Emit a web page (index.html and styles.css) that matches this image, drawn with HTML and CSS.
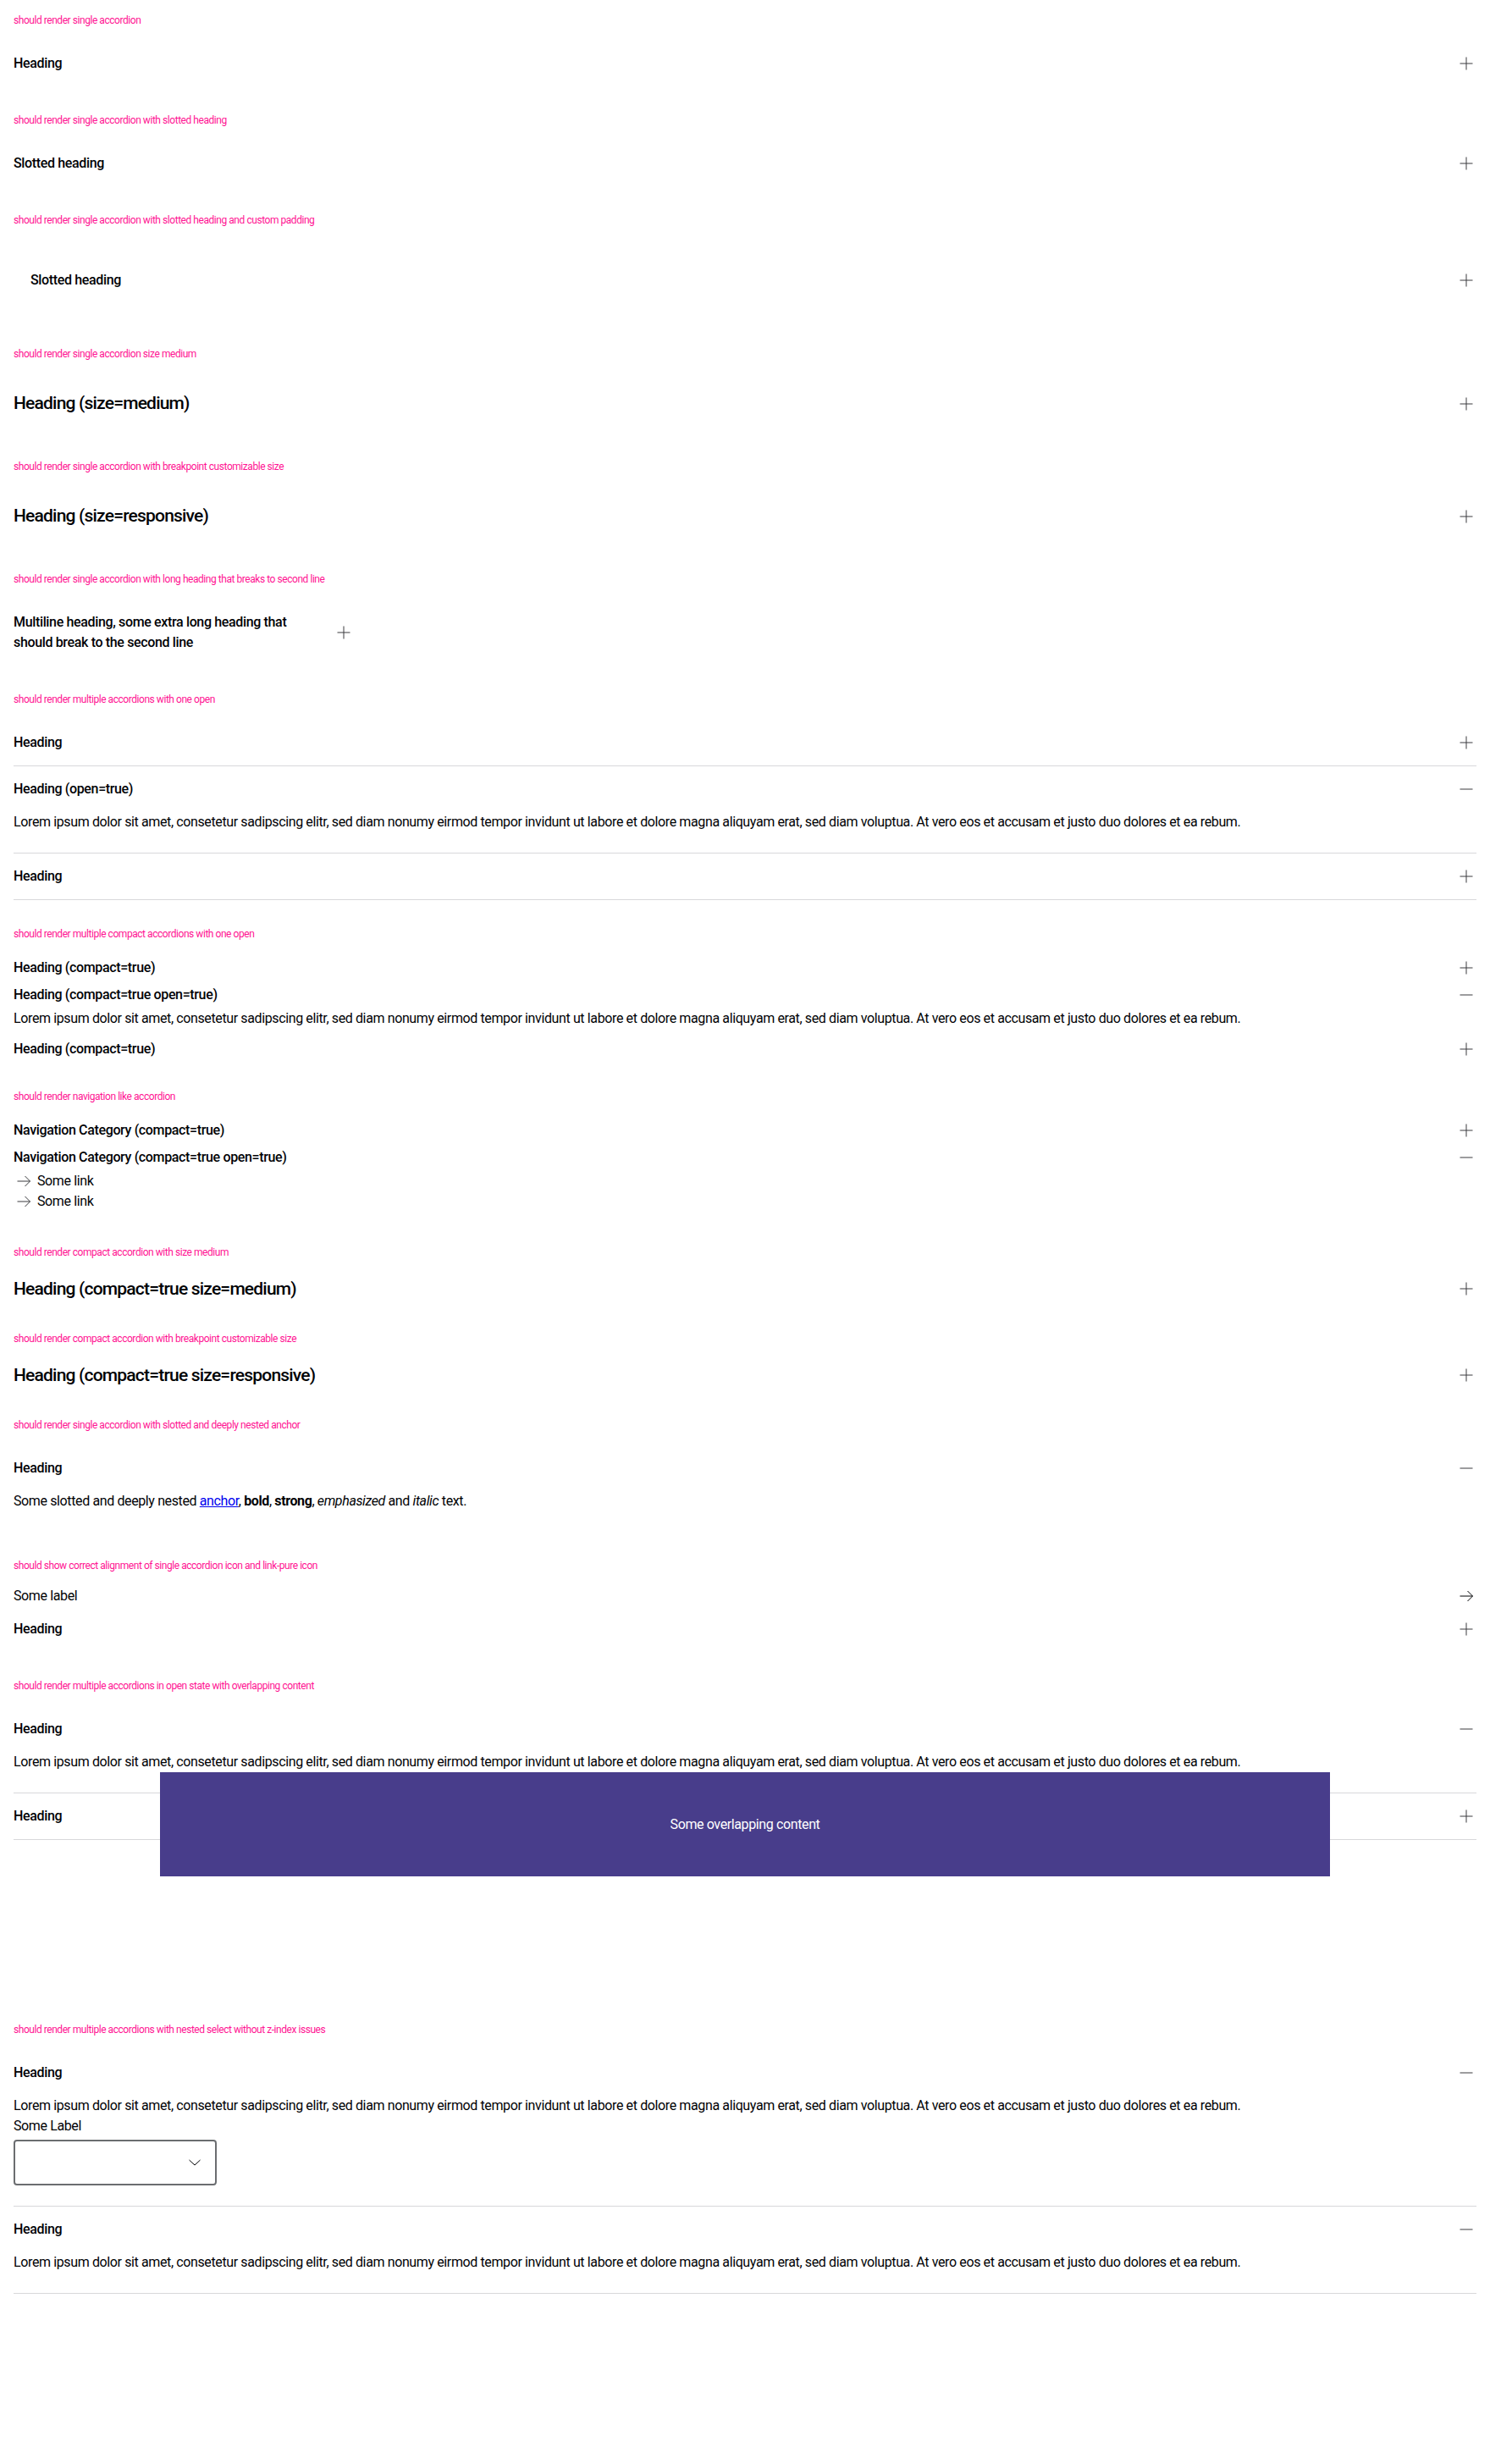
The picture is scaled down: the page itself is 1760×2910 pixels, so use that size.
FILE: index.html
```html
<!DOCTYPE html>
<html lang="en">
<head>
<meta charset="utf-8">
<title>Accordion</title>
<link rel="stylesheet" href="styles.css">
</head>
<body>
<svg width="0" height="0" class="defs" aria-hidden="true">
  <defs>
    <symbol id="i-plus" viewBox="0 0 24 24"><path d="M4.5 12h15M12 4.5v15" fill="none" stroke="currentColor" stroke-width="1"/></symbol>
    <symbol id="i-minus" viewBox="0 0 24 24"><path d="M4.5 12h15" fill="none" stroke="currentColor" stroke-width="1"/></symbol>
    <symbol id="i-arrow" viewBox="0 0 24 24"><path d="M4.5 12h15M13.5 6l6 6-6 6" fill="none" stroke="currentColor" stroke-width="1"/></symbol>
    <symbol id="i-down" viewBox="0 0 24 24"><path d="M5.5 9l6.5 6 6.5-6" fill="none" stroke="currentColor" stroke-width="1"/></symbol>
  </defs>
</svg>
<main class="page">

  <section class="pg">
    <p class="title">should render single accordion</p>
    <div class="acc">
      <div class="head"><span class="h">Heading</span><svg class="ic"><use href="#i-plus"/></svg></div>
    </div>
  </section>

  <section class="pg">
    <p class="title">should render single accordion with slotted heading</p>
    <div class="acc">
      <div class="head"><span class="h">Slotted heading</span><svg class="ic"><use href="#i-plus"/></svg></div>
    </div>
  </section>

  <section class="pg">
    <p class="title">should render single accordion with slotted heading and custom padding</p>
    <div class="acc">
      <div class="head"><span class="h padded">Slotted heading</span><svg class="ic"><use href="#i-plus"/></svg></div>
    </div>
  </section>

  <section class="pg">
    <p class="title">should render single accordion size medium</p>
    <div class="acc medium">
      <div class="head"><span class="h">Heading (size=medium)</span><svg class="ic"><use href="#i-plus"/></svg></div>
    </div>
  </section>

  <section class="pg">
    <p class="title">should render single accordion with breakpoint customizable size</p>
    <div class="acc medium">
      <div class="head"><span class="h">Heading (size=responsive)</span><svg class="ic"><use href="#i-plus"/></svg></div>
    </div>
  </section>

  <section class="pg">
    <p class="title">should render single accordion with long heading that breaks to second line</p>
    <div class="acc narrow">
      <div class="head"><span class="h">Multiline heading, some extra long heading that<br>should break to the second line</span><svg class="ic"><use href="#i-plus"/></svg></div>
    </div>
  </section>

  <section class="pg">
    <p class="title">should render multiple accordions with one open</p>
    <div class="acc lined">
      <div class="head"><span class="h">Heading</span><svg class="ic"><use href="#i-plus"/></svg></div>
    </div>
    <div class="acc lined">
      <div class="head"><span class="h">Heading (open=true)</span><svg class="ic"><use href="#i-minus"/></svg></div>
      <div class="body">Lorem ipsum dolor sit amet, consetetur sadipscing elitr, sed diam nonumy eirmod tempor invidunt ut labore et dolore magna aliquyam erat, sed diam voluptua. At vero eos et accusam et justo duo dolores et ea rebum.</div>
    </div>
    <div class="acc lined">
      <div class="head"><span class="h">Heading</span><svg class="ic"><use href="#i-plus"/></svg></div>
    </div>
  </section>

  <section class="pg">
    <p class="title">should render multiple compact accordions with one open</p>
    <div class="acc compact">
      <div class="head"><span class="h">Heading (compact=true)</span><svg class="ic"><use href="#i-plus"/></svg></div>
    </div>
    <div class="acc compact">
      <div class="head"><span class="h">Heading (compact=true open=true)</span><svg class="ic"><use href="#i-minus"/></svg></div>
      <div class="body">Lorem ipsum dolor sit amet, consetetur sadipscing elitr, sed diam nonumy eirmod tempor invidunt ut labore et dolore magna aliquyam erat, sed diam voluptua. At vero eos et accusam et justo duo dolores et ea rebum.</div>
    </div>
    <div class="acc compact">
      <div class="head"><span class="h">Heading (compact=true)</span><svg class="ic"><use href="#i-plus"/></svg></div>
    </div>
  </section>

  <section class="pg">
    <p class="title">should render navigation like accordion</p>
    <div class="acc compact">
      <div class="head"><span class="h">Navigation Category (compact=true)</span><svg class="ic"><use href="#i-plus"/></svg></div>
    </div>
    <div class="acc compact">
      <div class="head"><span class="h">Navigation Category (compact=true open=true)</span><svg class="ic"><use href="#i-minus"/></svg></div>
      <div class="body">
        <a class="nav-link"><svg class="ic"><use href="#i-arrow"/></svg><span>Some link</span></a>
        <a class="nav-link"><svg class="ic"><use href="#i-arrow"/></svg><span>Some link</span></a>
      </div>
    </div>
  </section>

  <section class="pg">
    <p class="title">should render compact accordion with size medium</p>
    <div class="acc compact medium">
      <div class="head"><span class="h">Heading (compact=true size=medium)</span><svg class="ic"><use href="#i-plus"/></svg></div>
    </div>
  </section>

  <section class="pg">
    <p class="title">should render compact accordion with breakpoint customizable size</p>
    <div class="acc compact medium">
      <div class="head"><span class="h">Heading (compact=true size=responsive)</span><svg class="ic"><use href="#i-plus"/></svg></div>
    </div>
  </section>

  <section class="pg">
    <p class="title">should render single accordion with slotted and deeply nested anchor</p>
    <div class="acc">
      <div class="head"><span class="h">Heading</span><svg class="ic"><use href="#i-minus"/></svg></div>
      <div class="body">Some slotted and deeply nested <a href="#" class="anchor">anchor</a>, <b>bold</b>, <strong>strong</strong>, <em>emphasized</em> and <i>italic</i> text.</div>
    </div>
  </section>

  <section class="pg">
    <p class="title">should show correct alignment of single accordion icon and link-pure icon</p>
    <a class="link-pure"><span>Some label</span><svg class="ic dark"><use href="#i-arrow"/></svg></a>
    <div class="acc">
      <div class="head"><span class="h">Heading</span><svg class="ic"><use href="#i-plus"/></svg></div>
    </div>
  </section>

  <section class="pg">
    <p class="title">should render multiple accordions in open state with overlapping content</p>
    <div class="overlap-wrap">
      <div class="acc lined">
        <div class="head"><span class="h">Heading</span><svg class="ic"><use href="#i-minus"/></svg></div>
        <div class="body">Lorem ipsum dolor sit amet, consetetur sadipscing elitr, sed diam nonumy eirmod tempor invidunt ut labore et dolore magna aliquyam erat, sed diam voluptua. At vero eos et accusam et justo duo dolores et ea rebum.</div>
      </div>
      <div class="acc lined">
        <div class="head"><span class="h">Heading</span><svg class="ic"><use href="#i-plus"/></svg></div>
      </div>
      <div class="overlay">Some overlapping content</div>
    </div>
  </section>

  <section class="pg">
    <p class="title">should render multiple accordions with nested select without z-index issues</p>
    <div class="acc lined">
      <div class="head"><span class="h">Heading</span><svg class="ic"><use href="#i-minus"/></svg></div>
      <div class="body">
        <div>Lorem ipsum dolor sit amet, consetetur sadipscing elitr, sed diam nonumy eirmod tempor invidunt ut labore et dolore magna aliquyam erat, sed diam voluptua. At vero eos et accusam et justo duo dolores et ea rebum.</div>
        <div class="field">
          <span class="field-label">Some Label</span>
          <div class="select"><svg class="chev"><use href="#i-down"/></svg></div>
        </div>
      </div>
    </div>
    <div class="acc lined">
      <div class="head"><span class="h">Heading</span><svg class="ic"><use href="#i-minus"/></svg></div>
      <div class="body">Lorem ipsum dolor sit amet, consetetur sadipscing elitr, sed diam nonumy eirmod tempor invidunt ut labore et dolore magna aliquyam erat, sed diam voluptua. At vero eos et accusam et justo duo dolores et ea rebum.</div>
    </div>
  </section>

</main>
</body>
</html>
```

FILE: styles.css
```css
* { box-sizing: border-box; }

html, body {
  margin: 0;
  background: #ffffff;
}

body {
  color: #010205;
  font-family: Roboto, "Liberation Sans", Arial, sans-serif;
  font-size: 16px;
  line-height: 24px;
  letter-spacing: -0.38px;
}

.defs { position: absolute; width: 0; height: 0; overflow: hidden; }

.page {
  padding: 0 16px;
  min-height: 2910px;
}

.pg {
  padding: 16px 0;
}

.title {
  margin: 0 0 16px;
  font-size: 12px;
  line-height: 16px;
  color: #ff1493;
  letter-spacing: -0.45px;
}

.acc.lined {
  border-bottom: 1px solid #d8d8db;
}

.head {
  display: flex;
  align-items: center;
  justify-content: space-between;
  gap: 24px;
  padding: 15px 0;
}

.h {
  font-size: 16px;
  line-height: 24px;
  font-weight: 500;
  letter-spacing: -0.35px;
}

.h.padded {
  padding: 20px;
}

.ic {
  width: 24px;
  height: 24px;
  flex: none;
  color: #3a3b3e;
}

.ic.dark { color: #010205; }

.body {
  padding-bottom: 24px;
}

.medium .head {
  padding: 20px 0;
}

.medium .h {
  font-size: 21px;
  line-height: 29px;
  letter-spacing: -0.8px;
}

.compact .head {
  padding: 4px 0;
}

.compact .body {
  padding-bottom: 8px;
}

.compact.medium .head {
  padding: 4px 0;
}

.compact.medium .h {
  line-height: 30px;
}

.narrow {
  width: 402px;
}

.nav-link {
  display: flex;
  align-items: center;
  gap: 4px;
  height: 24px;
  color: #010205;
}

.anchor {
  color: #0000ee;
  text-decoration: underline;
}

.link-pure {
  display: flex;
  align-items: center;
  justify-content: space-between;
  height: 24px;
  color: #010205;
}

.overlap-wrap {
  position: relative;
  padding-bottom: 184px;
}

.overlay {
  position: absolute;
  top: 78px;
  left: 10%;
  width: 80%;
  height: 123px;
  background: #483d8b;
  color: #ffffff;
  display: flex;
  align-items: center;
  justify-content: center;
}

.field {
  display: flex;
  flex-direction: column;
}

.field-label {
  line-height: 24px;
}

.select {
  margin-top: 4px;
  width: 240px;
  height: 54px;
  border: 2px solid #6b6d70;
  border-radius: 4px;
  display: flex;
  align-items: center;
  justify-content: flex-end;
  padding-right: 12px;
}

.chev {
  width: 24px;
  height: 24px;
  color: #010205;
}
```
